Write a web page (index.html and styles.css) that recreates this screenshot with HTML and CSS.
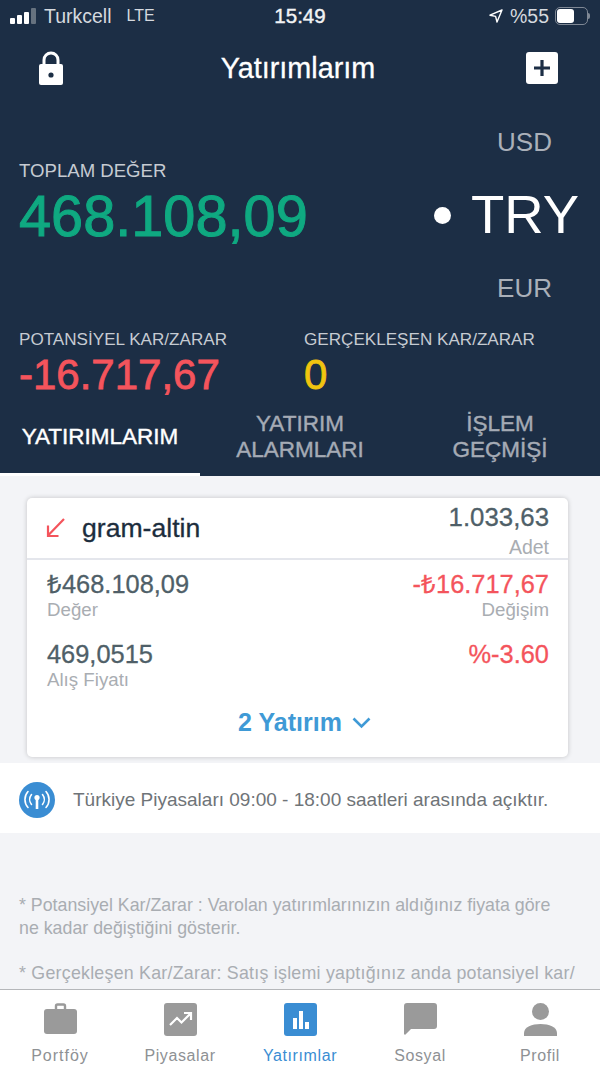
FILE: index.html
```html
<!DOCTYPE html>
<html lang="tr">
<head>
    <meta charset="UTF-8">
    <meta name="viewport" content="width=device-width, initial-scale=1.0">
    <title>Yatırımlarım</title>
    <link rel="stylesheet" href="styles.css">
</head>
<body>
    <div class="app">
        <div class="top">
            <div class="status-bar">
                <div class="status-left">
                    <div class="signal"><i></i><i></i><i></i><i class="off"></i></div>
                    <span>Turkcell</span>
                    <span class="lte">LTE</span>
                </div>
                <div class="status-time">15:49</div>
                <div class="status-right">
                    <svg class="locate" width="14" height="14" viewBox="0 0 14 14"><path d="M13 1 1 6.2l5.6 1.2L8 13z" fill="none" stroke="#fff" stroke-width="1.4" stroke-linejoin="round"/></svg>
                    <span>%55</span>
                    <div class="battery"><div class="battery-fill"></div></div>
                    <div class="battery-nub"></div>
                </div>
            </div>

            <div class="nav">
                <svg width="26" height="34" viewBox="0 0 26 34"><path d="M6 14V9a7 7 0 0 1 14 0v5" fill="none" stroke="#fff" stroke-width="3"/><rect x="1" y="13" width="24" height="21" rx="2" fill="#fff"/><circle cx="13" cy="24" r="2.6" fill="#1c2e45"/></svg>
                <h1>Yatırımlarım</h1>
                <div class="add-btn">
                    <svg width="18" height="18" viewBox="0 0 18 18"><path d="M9 1v16M1 9h16" stroke="#1c2e45" stroke-width="3.2"/></svg>
                </div>
            </div>

            <div class="total">
                <div class="total-left">
                    <div class="label total-label">TOPLAM DEĞER</div>
                    <div class="total-value">468.108,09</div>
                </div>
                <div class="currency">
                    <div class="cur">USD</div>
                    <div class="cur-active"><span class="dot"></span>TRY</div>
                    <div class="cur">EUR</div>
                </div>
            </div>

            <div class="profit">
                <div class="profit-col">
                    <div class="label">POTANSİYEL KAR/ZARAR</div>
                    <div class="profit-value red">-16.717,67</div>
                </div>
                <div class="profit-col">
                    <div class="label">GERÇEKLEŞEN KAR/ZARAR</div>
                    <div class="profit-value yellow">0</div>
                </div>
            </div>

            <div class="tabs">
                <div class="tab active">YATIRIMLARIM</div>
                <div class="tab">YATIRIM<br>ALARMLARI</div>
                <div class="tab">İŞLEM<br>GEÇMİŞİ</div>
            </div>
        </div>

        <div class="content">
            <div class="card">
                <div class="card-head">
                    <div class="card-name">
                        <svg width="20" height="20" viewBox="0 0 20 20"><path d="M18 1 2.5 17M2 7.5V18h10.5" fill="none" stroke="#f4545c" stroke-width="2.2"/></svg>
                        <span>gram-altin</span>
                    </div>
                    <div class="card-qty">
                        <div class="num">1.033,63</div>
                        <div class="sub">Adet</div>
                    </div>
                </div>
                <div class="card-body">
                    <div class="row">
                        <div>
                            <div class="num">₺468.108,09</div>
                            <div class="sub">Değer</div>
                        </div>
                        <div class="right">
                            <div class="num red-text">-₺16.717,67</div>
                            <div class="sub">Değişim</div>
                        </div>
                    </div>
                    <div class="row">
                        <div>
                            <div class="num">469,0515</div>
                            <div class="sub">Alış Fiyatı</div>
                        </div>
                        <div class="right">
                            <div class="num red-text">%-3.60</div>
                        </div>
                    </div>
                    <div class="more">
                        <span>2 Yatırım</span>
                        <svg width="19" height="12" viewBox="0 0 19 12"><path d="M1.500 1.500 9.500 9.500l8-8" fill="none" stroke="#3f9ad6" stroke-width="2.600"/></svg>
                    </div>
                </div>
            </div>

            <div class="market">
                <svg width="36" height="36" viewBox="0 0 36 36">
                    <circle cx="18" cy="18" r="18" fill="#3a8dd3"/>
                    <g fill="none" stroke="#fff" stroke-width="1.600" stroke-linecap="round">
                        <path d="M12.500 12.500a8 8 0 0 0 0 10M23.500 12.500a8 8 0 0 1 0 10"/>
                        <path d="M9 9.500a12 12 0 0 0 0 16M27 9.500a12 12 0 0 1 0 16"/>
                    </g>
                    <circle cx="18" cy="15.500" r="2.600" fill="#fff"/>
                    <path d="M18 16v11" stroke="#fff" stroke-width="2.600"/>
                </svg>
                <span>Türkiye Piyasaları 09:00 - 18:00 saatleri arasında açıktır.</span>
            </div>

            <div class="notes">
                <p>* Potansiyel Kar/Zarar : Varolan yatırımlarınızın aldığınız fiyata göre<br>ne kadar değiştiğini gösterir.</p>
                <p class="note-wide">* Gerçekleşen Kar/Zarar: Satış işlemi yaptığınız anda potansiyel kar/<br>zarar gerçekleşen kar/zarara dönüşür.</p>
            </div>
        </div>

        <div class="tabbar">
            <div class="tabbar-item">
                <svg width="33" height="31" viewBox="0 0 33 31"><path d="M12 7V3a1.500 1.500 0 0 1 1.500-1.500h6A1.500 1.500 0 0 1 21 3v4" fill="none" stroke="#9a9a9a" stroke-width="2.400"/><rect y="6" width="33" height="25" rx="3" fill="#9a9a9a"/></svg>
                <span>Portföy</span>
            </div>
            <div class="tabbar-item">
                <svg width="33" height="33" viewBox="0 0 33 33"><rect width="33" height="33" rx="3" fill="#9a9a9a"/><path d="M6 22l7-7 4.500 4.500L26 11M20 10h7v7" fill="none" stroke="#fff" stroke-width="2.200"/></svg>
                <span>Piyasalar</span>
            </div>
            <div class="tabbar-item current">
                <svg width="33" height="33" viewBox="0 0 33 33"><rect width="33" height="33" rx="3" fill="#3a8dd3"/><path d="M9 15h4v11H9zM15 8h4v18h-4zM21 19h4v7h-4z" fill="#fff"/></svg>
                <span>Yatırımlar</span>
            </div>
            <div class="tabbar-item">
                <svg width="33" height="33" viewBox="0 0 33 33"><path d="M3 0h27a3 3 0 0 1 3 3v20a3 3 0 0 1-3 3H7l-5.500 5.500a1 1 0 0 1-1.500-1V3a3 3 0 0 1 3-3z" fill="#9a9a9a"/></svg>
                <span>Sosyal</span>
            </div>
            <div class="tabbar-item">
                <svg width="33" height="33" viewBox="0 0 33 33"><circle cx="16.500" cy="8.500" r="8.500" fill="#9a9a9a"/><path d="M0 33v-3c0-6 8-9 16.500-9S33 24 33 30v3z" fill="#9a9a9a"/></svg>
                <span>Profil</span>
            </div>
        </div>
    </div>
</body>
</html>
```

FILE: styles.css
```css
* {
    box-sizing: border-box;
}

html, body {
    margin: 0;
    padding: 0;
    height: 100%;
    overflow: hidden;
}

body {
    font-family: 'Liberation Sans', Arial, sans-serif;
    background: #f3f4f7;
}

.app {
    display: flex;
    flex-direction: column;
    height: 1067px;
}

.top {
    background: #1c2e45;
    color: #fff;
    height: 476px;
    flex: none;
    display: flex;
    flex-direction: column;
}

/* status bar */
.status-bar {
    display: grid;
    grid-template-columns: 1fr auto 1fr;
    align-items: center;
    height: 32px;
    padding: 0 10px;
    font-size: 19.5px;
}

.status-left, .status-right {
    display: flex;
    align-items: center;
}

.status-left span {
    color: #d5d9df;
}

.lte {
    margin-left: 15px;
    font-size: 16px;
}

.status-right {
    justify-content: flex-end;
    color: #d5d9df;
}

.signal {
    display: flex;
    align-items: flex-end;
    gap: 2px;
    margin-right: 8px;
    height: 16px;
}

.signal i {
    width: 5px;
    background: #fff;
    border-radius: 1px;
}

.signal i:nth-child(1) { height: 6px; }
.signal i:nth-child(2) { height: 9px; }
.signal i:nth-child(3) { height: 12px; }
.signal i:nth-child(4) { height: 16px; }
.signal i.off { background: #66727f; }

.status-time {
    font-size: 20.5px;
    color: #f2f3f5;
    -webkit-text-stroke: 0.4px #f2f3f5;
}

.locate {
    margin-right: 7px;
}

.battery {
    width: 33px;
    height: 18px;
    margin-left: 6px;
    border: 1px solid #7f8895;
    border-radius: 5px;
    padding: 1px;
}

.battery-fill {
    width: 17px;
    height: 14px;
    background: #fff;
    border-radius: 3px;
}

.battery-nub {
    width: 2px;
    height: 6px;
    background: #7f8895;
    border-radius: 0 2px 2px 0;
}

/* nav */
.nav {
    display: flex;
    align-items: center;
    justify-content: space-between;
    height: 72px;
    padding: 0 42px 0 38px;
}

.nav h1 {
    margin: 0 0 0 6px;
    font-size: 28.8px;
    font-weight: normal;
    -webkit-text-stroke: 0.3px #fff;
}

.add-btn {
    width: 32px;
    height: 32px;
    background: #fff;
    border-radius: 3px;
    display: flex;
    align-items: center;
    justify-content: center;
}

/* total */
.label {
    font-size: 17.1px;
    line-height: 21px;
    color: #c6cbd2;
    white-space: nowrap;
}

.total-label {
    font-size: 18.6px;
}

.total {
    display: flex;
    justify-content: space-between;
    align-items: flex-start;
    padding: 23px 21px 0 19px;
}

.total-left {
    margin-top: 33px;
}

.total-value {
    font-size: 57.7px;
    color: #0fa981;
    -webkit-text-stroke: 1px #0fa981;
    line-height: 70px;
}

.currency {
    display: flex;
    flex-direction: column;
    align-items: flex-end;
}

.cur {
    font-size: 26px;
    color: #aab0b9;
    line-height: 30px;
    padding-right: 27px;
}

.cur-active {
    display: flex;
    align-items: center;
    font-size: 54.5px;
    line-height: 116px;
    height: 116px;
}

.dot {
    width: 17px;
    height: 17px;
    background: #fff;
    border-radius: 50%;
    margin-right: 20px;
}

.profit {
    display: flex;
    padding: 26px 0 0 19px;
}

.profit-col {
    width: 285px;
}

.profit-value {
    font-size: 42px;
    line-height: 50px;
    -webkit-text-stroke: 0.8px currentColor;
}

.red { color: #f4545c; }
.yellow { color: #f1c40f; }

.tabs {
    display: flex;
    margin-top: auto;
}

.tab {
    width: 200px;
    height: 64px;
    padding-bottom: 14px;
    display: flex;
    align-items: center;
    justify-content: center;
    text-align: center;
    font-size: 22.5px;
    line-height: 26px;
    color: #a5abb5;
    -webkit-text-stroke: 0.4px currentColor;
}

.tab.active {
    color: #fff;
    padding-bottom: 11px;
    border-bottom: 3px solid #fff;
}

/* content */
.content {
    flex: 1;
    min-height: 0;
    overflow: hidden;
    padding-top: 22px;
}

.card {
    width: 541px;
    margin-left: 27px;
    height: 259px;
    background: #fff;
    border-radius: 5px;
    box-shadow: 0 0 5px rgba(0, 0, 0, 0.2);
}

.card-head {
    display: flex;
    justify-content: space-between;
    align-items: center;
    height: 62px;
    padding: 0 19px;
    border-bottom: 2px solid #e4e6ec;
}

.card-name {
    display: flex;
    align-items: center;
    gap: 16px;
    font-size: 26.6px;
    color: #1c2d3d;
    -webkit-text-stroke: 0.3px #1c2d3d;
}

.card-qty {
    align-self: flex-start;
    padding-top: 4px;
    text-align: right;
}

.card-qty .sub {
    margin-top: 4px;
    font-size: 19.5px;
}

.card-qty .num {
    font-size: 25.8px;
}

.card-body {
    padding: 9px 19px 0 20px;
}

.row {
    display: flex;
    justify-content: space-between;
    height: 70px;
}

.right {
    text-align: right;
}

.num {
    font-size: 25.4px;
    line-height: 30px;
    color: #4f5f68;
    -webkit-text-stroke: 0.3px currentColor;
}

.sub {
    font-size: 18.7px;
    line-height: 22px;
    color: #a9adb2;
}

.num.red-text {
    color: #f4545c;
}

.more {
    display: flex;
    justify-content: center;
    align-items: center;
    gap: 10px;
    margin-top: -1px;
    padding-left: 13px;
    font-size: 25px;
    font-weight: bold;
    color: #3f9ad6;
}

.market {
    display: flex;
    align-items: center;
    gap: 18px;
    height: 70px;
    margin-top: 6px;
    padding: 3px 0 0 19px;
    background: #fff;
    font-size: 19px;
    color: #6f7478;
}

.notes {
    padding: 61px 0 0 19px;
    font-size: 17.8px;
    line-height: 23px;
    color: #a9adb2;
}

.notes p {
    margin: 0 0 22px;
    white-space: nowrap;
}

.notes .note-wide {
    letter-spacing: 0.25px;
}

/* tab bar */
.tabbar {
    flex: none;
    height: 78px;
    display: flex;
    background: #fff;
    border-top: 1px solid #b5b7ba;
}

.tabbar-item {
    width: 120px;
    display: flex;
    flex-direction: column;
    align-items: center;
    padding-top: 13px;
    font-size: 16px;
    letter-spacing: 0.6px;
    color: #8e9194;
}

.tabbar-item span {
    margin-top: 11px;
}

.tabbar-item:first-child span {
    margin-top: 13px;
    letter-spacing: 1px;
}

.tabbar-item.current {
    color: #3a8dd3;
}
```
